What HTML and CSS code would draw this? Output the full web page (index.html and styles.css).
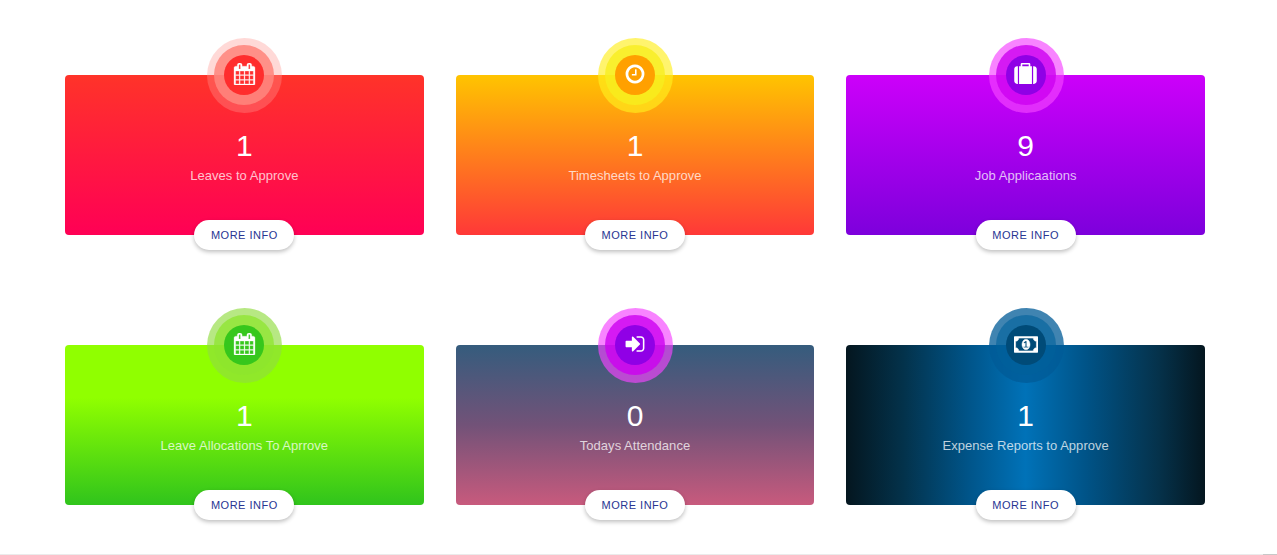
FILE: index.html
```
<!DOCTYPE html>
<html lang="en">
<head>
<meta charset="utf-8">
<title>Dashboard</title>
<link rel="stylesheet" href="styles.css">
</head>
<body>
<svg class="sprite" aria-hidden="true">
  <symbol id="calendar" viewBox="0 0 1792 1792"><path d="M192 1664h288v-288h-288v288zm352 0h320v-288h-320v288zm-352-352h288v-320h-288v320zm352 0h320v-320h-320v320zm-352-384h288v-288h-288v288zm736 736h320v-288h-320v288zm-384-736h320v-288h-320v288zm768 736h288v-288h-288v288zm-384-352h320v-320h-320v320zm-352-864v-288q0-13-9.5-22.5t-22.5-9.5h-64q-13 0-22.5 9.5t-9.5 22.5v288q0 13 9.5 22.5t22.5 9.5h64q13 0 22.5-9.5t9.5-22.5zm736 864h288v-320h-288v320zm-384-384h320v-288h-320v288zm384 0h288v-288h-288v288zm32-480v-288q0-13-9.5-22.5t-22.5-9.5h-64q-13 0-22.5 9.5t-9.5 22.5v288q0 13 9.5 22.5t22.5 9.5h64q13 0 22.5-9.5t9.5-22.5zm384-64v1280q0 52-38 90t-90 38h-1408q-52 0-90-38t-38-90v-1280q0-52 38-90t90-38h128v-96q0-66 47-113t113-47h64q66 0 113 47t47 113v96h384v-96q0-66 47-113t113-47h64q66 0 113 47t47 113v96h128q52 0 90 38t38 90z"/></symbol>
  <symbol id="clock" viewBox="0 0 1792 1792"><path d="M1024 544v448q0 14-9 23t-23 9h-320q-14 0-23-9t-9-23v-64q0-14 9-23t23-9h224v-352q0-14 9-23t23-9h64q14 0 23 9t9 23zm416 352q0-148-73-273t-198-198-273-73-273 73-198 198-73 273 73 273 198 198 273 73 273-73 198-198 73-273zm224 0q0 209-103 385.5t-279.5 279.5-385.5 103-385.5-103-279.5-279.5-103-385.5 103-385.5 279.5-279.5 385.5-103 385.5 103 279.5 279.5 103 385.5z"/></symbol>
  <symbol id="suitcase" viewBox="0 0 1792 1792"><path d="M640 256h512v-128h-512v128zm-352 0v1408h-64q-92 0-158-66t-66-158v-960q0-92 66-158t158-66h64zm1120 0v1408h-1024v-1408h128v-160q0-40 28-68t68-28h576q40 0 68 28t28 68v160h128zm384 224v960q0 92-66 158t-158 66h-64v-1408h64q92 0 158 66t66 158z"/></symbol>
  <symbol id="sign-in" viewBox="0 0 1792 1792"><path d="M1312 896q0 26-19 45l-544 544q-19 19-45 19t-45-19-19-45v-288h-448q-26 0-45-19t-19-45v-384q0-26 19-45t45-19h448v-288q0-26 19-45t45-19 45 19l544 544q19 19 19 45zm352-352v704q0 119-84.5 203.5t-203.5 84.5h-320q-13 0-22.5-9.5t-9.5-22.5q0-4-1-20t-.5-26.5 3-23.5 10-19.5 20.5-6.5h320q66 0 113-47t47-113v-704q0-66-47-113t-113-47h-312l-11.5-1-11.5-3-8-5.5-7-9-2-13.5q0-4-1-20t-.5-26.5 3-23.5 10-19.5 20.5-6.5h320q119 0 203.5 84.5t84.5 203.5z"/></symbol>
  <symbol id="money" viewBox="0 0 1920 1792"><path d="M768 1152h384v-96h-128v-448h-114l-148 137 77 80q42-37 55-57h2v288h-128v96zm512-256q0 70-21 142t-59.5 134-101.5 101-138 39-138-39-101.5-101-59.5-134-21-142 21-142 59.5-134 101.5-101 138-39 138 39 101.5 101 59.5 134 21 142zm512 256v-512q-106 0-181-75t-75-181h-1152q0 106-75 181t-181 75v512q106 0 181 75t75 181h1152q0-106 75-181t181-75zm128-832v1152q0 26-19 45t-45 19h-1792q-26 0-45-19t-19-45v-1152q0-26 19-45t45-19h1792q26 0 45 19t19 45z"/></symbol>
</svg>
<main class="cards">
  <section class="card card-red">
    <div class="badge"><div class="badge-mid"><div class="badge-core"><svg class="icon icon-calendar"><use href="#calendar"/></svg></div></div></div>
    <div class="count">1</div>
    <div class="label">Leaves to Approve</div>
    <a class="more">MORE INFO</a>
  </section>
  <section class="card card-orange">
    <div class="badge"><div class="badge-mid"><div class="badge-core"><svg class="icon"><use href="#clock"/></svg></div></div></div>
    <div class="count">1</div>
    <div class="label">Timesheets to Approve</div>
    <a class="more">MORE INFO</a>
  </section>
  <section class="card card-purple">
    <div class="badge"><div class="badge-mid"><div class="badge-core"><svg class="icon icon-suitcase"><use href="#suitcase"/></svg></div></div></div>
    <div class="count">9</div>
    <div class="label">Job Applicaations</div>
    <a class="more">MORE INFO</a>
  </section>
  <section class="card card-green">
    <div class="badge"><div class="badge-mid"><div class="badge-core"><svg class="icon icon-calendar"><use href="#calendar"/></svg></div></div></div>
    <div class="count">1</div>
    <div class="label">Leave Allocations To Aprrove</div>
    <a class="more">MORE INFO</a>
  </section>
  <section class="card card-dusk">
    <div class="badge"><div class="badge-mid"><div class="badge-core"><svg class="icon"><use href="#sign-in"/></svg></div></div></div>
    <div class="count">0</div>
    <div class="label">Todays Attendance</div>
    <a class="more">MORE INFO</a>
  </section>
  <section class="card card-blue">
    <div class="badge"><div class="badge-mid"><div class="badge-core"><svg class="icon icon-money"><use href="#money"/></svg></div></div></div>
    <div class="count">1</div>
    <div class="label">Expense Reports to Approve</div>
    <a class="more">MORE INFO</a>
  </section>
</main>
<footer class="rule"><div class="rule-end"></div></footer>
</body>
</html>
```
FILE: styles.css
```
* { box-sizing: border-box; }
body {
  margin: 0;
  height: 555px;
  overflow: hidden;
  display: flex;
  flex-direction: column;
  justify-content: space-between;
  background: #fff;
  font-family: "Liberation Sans", Arial, sans-serif;
}
.sprite { position: absolute; width: 0; height: 0; }
.cards {
  display: grid;
  grid-template-columns: repeat(3, 1fr);
  grid-auto-rows: 160px;
  gap: 110px 32px;
  width: 1140px;
  margin: 75px 0 0 65px;
}
.card {
  display: flex;
  flex-direction: column;
  align-items: center;
  border-radius: 4px;
  color: #fff;
}
.badge, .badge-mid, .badge-core {
  display: flex;
  align-items: center;
  justify-content: center;
  flex: none;
  border-radius: 50%;
}
.badge { width: 75px; height: 75px; margin: -37px 0 0 1px; background: var(--outer); }
.badge-mid { width: 60px; height: 60px; margin: -1px 1px 0 0; background: var(--mid); }
.badge-core { width: 40px; height: 40px; background: var(--core); }
.icon { width: 22px; height: 22px; fill: #fff; margin-top: -2px; }
.icon-calendar { width: 23px; height: 22.5px; margin-top: -2.5px; stroke: #fff; stroke-width: 24px; }
.icon-suitcase { width: 23px; height: 22.5px; }
.icon-money { width: 24px; height: 23px; margin-left: 0; stroke: #fff; stroke-width: 40px; }
.count { margin-top: 16px; font-size: 30px; line-height: 34px; }
.label {
  margin-top: 5px;
  font-size: 13px;
  line-height: 15px;
  letter-spacing: .03px;
  color: rgba(255, 255, 255, .75);
  white-space: nowrap;
}
.more {
  flex: none;
  display: flex;
  align-items: center;
  justify-content: center;
  width: 100px;
  height: 29.5px;
  margin-top: 37.4px;
  border-radius: 15px;
  background: #fff;
  box-shadow: 0 2px 4px rgba(0, 0, 0, .25);
  color: #283593;
  font-size: 11px;
  letter-spacing: .5px;
}
.card-red {
  --outer: rgba(255, 150, 145, .36);
  --mid: rgba(255, 133, 125, .88);
  --core: #ff2d2d;
  background: linear-gradient(#ff3329, #ff0055);
}
.card-orange {
  --outer: rgba(255, 238, 30, .65);
  --mid: rgba(248, 238, 30, .8);
  --core: #ffa000;
  background: linear-gradient(#ffc400, #ff3838);
}
.card-purple {
  --outer: rgba(245, 69, 255, .66);
  --mid: rgba(204, 0, 240, .8);
  --core: #9000e6;
  background: linear-gradient(#cc00fa, #7d00dc);
}
.card-green {
  --outer: rgba(144, 220, 65, .65);
  --mid: rgba(142, 230, 45, .75);
  --core: #36c71c;
  background: linear-gradient(#90ff00 33%, #30c41c);
}
.card-dusk {
  --outer: rgba(245, 69, 255, .66);
  --mid: rgba(204, 0, 240, .8);
  --core: #9000e6;
  background: linear-gradient(#355c7d, #725278 50%, #c85a7d);
}
.card-blue {
  --outer: rgba(0, 91, 151, .75);
  --mid: rgba(0, 96, 155, .6);
  --core: #004b78;
  background: linear-gradient(90deg, #04161f, #03324b 16%, #00568c 35%, #0072b8 50%, #005387 67%, #05324b 87%, #04161f);
}
.rule { display: flex; justify-content: flex-end; height: 1px; background: #ebebeb; }
.rule-end { width: 14px; background: #c8c8c8; }
```
